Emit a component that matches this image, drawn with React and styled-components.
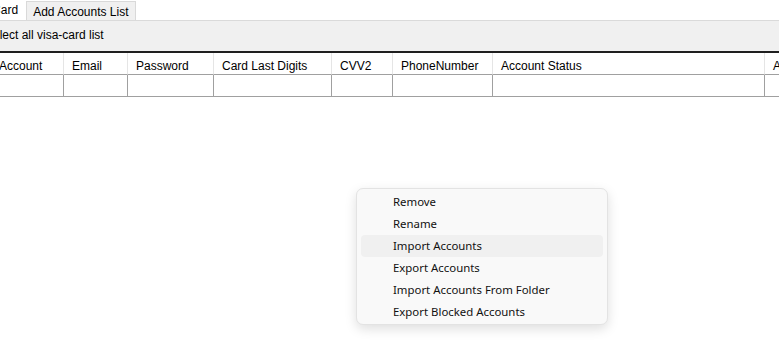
import React from 'react';
import styled, { createGlobalStyle } from 'styled-components';

const GlobalStyle = createGlobalStyle`
  html, body {
    margin: 0;
    padding: 0;
    background: #ffffff;
    overflow: hidden;
  }
  body {
    width: 779px;
    height: 343px;
    font-family: "Liberation Sans", Arial, sans-serif;
    font-size: 12px;
    color: #000000;
  }
`;

// --- Window shell ---
const Window = styled.div`
  position: relative;
  width: 779px;
  height: 343px;
  overflow: hidden;
  background: #ffffff;
`;

const TabStrip = styled.div`
  display: flex;
  align-items: flex-end;
  height: 20px;
  margin-left: -43px;
`;

const Tab = styled.div`
  box-sizing: border-box;
  height: ${p => (p.$active ? '20px' : '19px')};
  padding: ${p => (p.$active ? '3px 7px 0 7px' : '4px 6px 0 6px')};
  line-height: 13px;
  white-space: nowrap;
  background: ${p => (p.$active ? '#ffffff' : '#f0f0f0')};
  border: 1px solid ${p => (p.$active ? '#ffffff' : '#d9d9d9')};
  border-bottom: none;
`;

const Toolbar = styled.div`
  display: flex;
  align-items: center;
  box-sizing: border-box;
  height: 33px;
  padding-bottom: 2px;
  background: #f0f0f0;
  border-top: 1px solid #dadada;
  border-bottom: 2px solid #1f1f1f;
`;

const ToolbarLabel = styled.span`
  margin-left: -15px;
  white-space: nowrap;
  line-height: 14px;
`;

// --- Grid ---
const columns = [
  { name: 'Account', width: 73 },
  { name: 'Email', width: 64 },
  { name: 'Password', width: 86 },
  { name: 'Card Last Digits', width: 118 },
  { name: 'CVV2', width: 61 },
  { name: 'PhoneNumber', width: 100 },
  { name: 'Account Status', width: 272 },
  { name: 'Account Type', width: 120 },
];

const Grid = styled.div`
  display: grid;
  grid-template-columns: ${p => p.$cols};
  margin-left: -9px;
  width: max-content;
`;

const HeaderCell = styled.div`
  box-sizing: border-box;
  height: 22px;
  padding: 6px 0 0 8px;
  line-height: 14px;
  white-space: nowrap;
  overflow: hidden;
  border-right: 1px solid #e5e5e5;
  border-bottom: 1px solid #a0a0a0;
  background: #ffffff;
`;

const BodyCell = styled.div`
  box-sizing: border-box;
  height: 22px;
  border-right: 1px solid #a0a0a0;
  border-bottom: 1px solid #a0a0a0;
  background: #ffffff;
`;

// --- Context menu ---
const Menu = styled.ul`
  position: absolute;
  left: 356px;
  top: 188px;
  width: 252px;
  box-sizing: border-box;
  margin: 0;
  padding: 2px 0 1px;
  list-style: none;
  background: #f9f9f9;
  border: 1px solid #e3e3e3;
  border-radius: 7px;
  box-shadow: 0 4px 12px rgba(0, 0, 0, 0.13);
  font-family: "Noto Sans", "Open Sans", sans-serif;
  font-size: 11.4px;
  color: #111111;
`;

const MenuItem = styled.li`
  height: 22px;
  margin: 0 4px;
  padding-left: 32px;
  line-height: 22px;
  border-radius: 4px;
  white-space: nowrap;
  background: ${p => (p.$hover ? '#f0f0f0' : 'transparent')};
`;

const menuItems = [
  'Remove',
  'Rename',
  'Import Accounts',
  'Export Accounts',
  'Import Accounts From Folder',
  'Export Blocked Accounts',
];

export default function App() {
  const template = columns.map(c => `${c.width}px`).join(' ');

  return (
    <Window>
      <GlobalStyle />
      <TabStrip>
        <Tab $active>Visa-Card</Tab>
        <Tab>Add Accounts List</Tab>
      </TabStrip>

      <Toolbar>
        <ToolbarLabel>Select all visa-card list</ToolbarLabel>
      </Toolbar>

      <Grid $cols={template}>
        {columns.map(c => (
          <HeaderCell key={c.name}>{c.name}</HeaderCell>
        ))}
        {columns.map(c => (
          <BodyCell key={c.name} />
        ))}
      </Grid>

      <Menu>
        {menuItems.map(item => (
          <MenuItem key={item} $hover={item === 'Import Accounts'}>
            {item}
          </MenuItem>
        ))}
      </Menu>
    </Window>
  );
}
